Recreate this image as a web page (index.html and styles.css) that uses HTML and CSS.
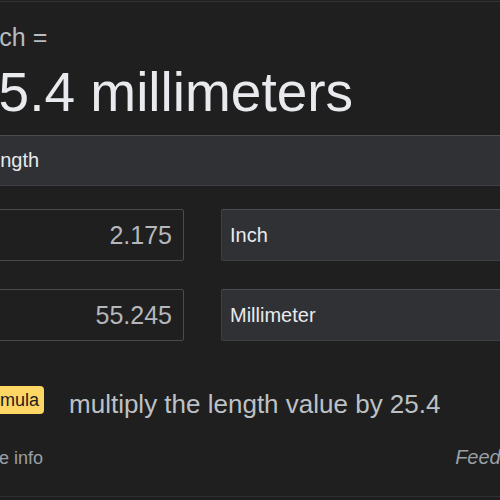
FILE: index.html
```html
<!DOCTYPE html>
<html>
<head>
<meta charset="utf-8">
<link rel="stylesheet" href="styles.css">
</head>
<body>
<div class="card">
  <div class="lead">1 inch =</div>
  <div class="result">25.4 millimeters</div>
  <div class="select wide">Length</div>
  <div class="rows">
    <div class="row">
      <div class="input">2.175</div>
      <div class="select unit">Inch</div>
    </div>
    <div class="row">
      <div class="input">55.245</div>
      <div class="select unit">Millimeter</div>
    </div>
  </div>
  <div class="formula">
    <span class="badge">Formula</span>
    <span class="ftext">multiply the length value by 25.4</span>
  </div>
  <div class="info">
    <span class="more">More info</span>
    <span class="feedback">Feedback</span>
  </div>
</div>
</body>
</html>
```

FILE: styles.css
```css
html, body {
  margin: 0;
  padding: 0;
  background: #1f1f1f;
  overflow: hidden;
}
body {
  width: 500px;
  height: 500px;
  font-family: "Liberation Sans", Arial, sans-serif;
}
.card {
  margin-top: 1px;
  margin-left: -32px;
  width: 575px;
  border-top: 1px solid #333436;
  border-bottom: 1px solid #2e2f31;
  padding: 20px 0 26px 0;
  box-sizing: border-box;
}
.lead {
  margin-left: -9px;
  font-size: 25px;
  line-height: 31px;
  color: #b8bbbf;
}
.result {
  margin-top: 7px;
  font-size: 55px;
  line-height: 64px;
  color: #e8eaed;
}
.select {
  background: #303134;
  border: 1px solid #3c4043;
  border-top-color: #4a4c50;
  border-radius: 2px;
  color: #e8eaed;
  display: flex;
  align-items: center;
  box-sizing: border-box;
}
.wide {
  margin-top: 11px;
  height: 51px;
  padding-left: 9px;
  font-size: 20px;
}
.rows {
  margin-top: 23px;
  display: flex;
  flex-direction: column;
  gap: 28px;
}
.row {
  display: flex;
  gap: 37px;
  height: 52px;
}
.input {
  width: 216px;
  box-sizing: border-box;
  border: 1px solid #4a4b4d;
  border-radius: 2px;
  display: flex;
  align-items: center;
  justify-content: flex-end;
  padding-right: 11px;
  font-size: 25px;
  color: #b4b7bb;
}
.unit {
  flex: 1;
  padding-left: 8px;
  font-size: 20px;
}
.formula {
  margin-top: 45px;
  display: flex;
  align-items: flex-start;
  gap: 25px;
}
.badge {
  background: #fdd663;
  color: #202124;
  font-size: 18px;
  line-height: 28px;
  padding: 0 5px;
  border-radius: 4px;
}
.ftext {
  margin-top: 2px;
  font-size: 26px;
  line-height: 32px;
  color: #bdc1c6;
}
.info {
  margin-top: 25px;
  display: flex;
  justify-content: space-between;
  align-items: baseline;
  font-size: 18px;
  line-height: 24px;
  color: #9aa0a6;
}
.feedback {
  font-style: italic;
  font-size: 20px;
}
```
